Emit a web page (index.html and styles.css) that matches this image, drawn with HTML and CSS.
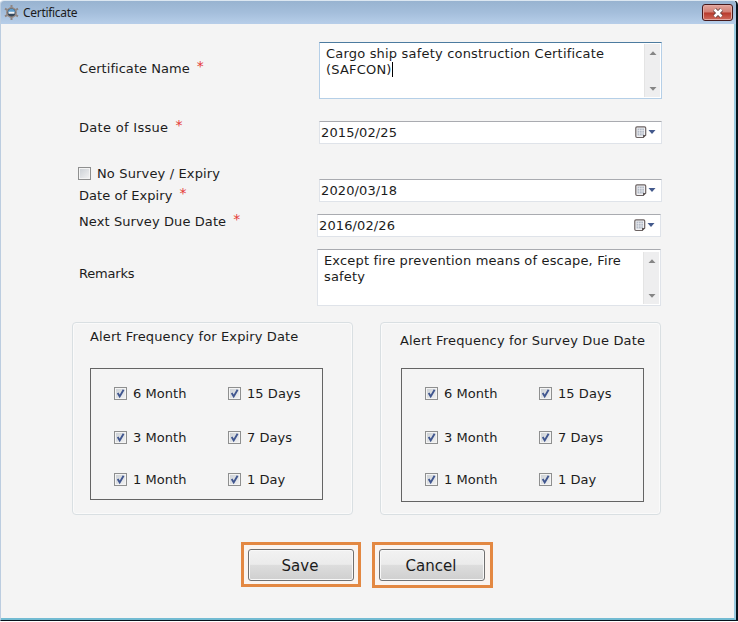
FILE: index.html
```html
<!DOCTYPE html>
<html lang="en">
<head>
<meta charset="utf-8">
<title>Certificate</title>
<link rel="stylesheet" href="styles.css">
</head>
<body>
<svg width="0" height="0" class="defs">
  <symbol id="cal" viewBox="0 0 21 13">
    <path d="M.8 2Q.8.8 2 .8H9.5Q10.700 .8 10.700 2V9L8.200 11.500H2Q.8 11.500 .8 10.300Z" fill="#f2f2f4" stroke="#6b6262" stroke-width="1.200"/>
    <path d="M2.500 2.500h6.500v7h-6.500z" fill="#b4bbc7"/>
    <path d="M2.500 4.500h6.500M2.500 7h6.500M4.500 2.500v7M7 2.500v7" stroke="#eef0f4" stroke-width=".6"/>
    <path d="M8 12V9h3.200z" fill="#5d5656"/>
    <path d="M13.500 4h7L17 8z" fill="#43598c"/>
  </symbol>
  <symbol id="up" viewBox="0 0 8 4"><path d="M.5 4h7L4 .3z" fill="#858585"/></symbol>
  <symbol id="down" viewBox="0 0 8 4"><path d="M.5 0h7L4 3.700z" fill="#858585"/></symbol>
  <symbol id="tick" viewBox="0 0 13 13"><path d="M3.700 6 5.700 9.400 9.600 2.800" fill="none" stroke="#40568f" stroke-width="1.900"/></symbol>
</svg>
<div class="window">
  <header class="titlebar">
    <svg class="logo" width="15" height="15" viewBox="0 0 15 15">
      <path d="M7.500 0v15M1 3.700l13 7.600M14 3.700 1 11.300" stroke="#8d8582" stroke-width="2"/>
      <circle cx="7.500" cy="7.500" r="4.700" fill="#34485c" stroke="#9a8c86" stroke-width="1.500"/>
      <path d="M4 7.300a3.500 3.500 0 0 1 7 0z" fill="#5c9ccc"/>
      <path d="M4.500 6.800h6v2h-6z" fill="#f1f5f8"/>
    </svg>
    <span class="title">Certificate</span>
    <button class="close" aria-label="Close"><svg width="12" height="10" viewBox="0 0 12 10"><path d="M2.500 1.500l7 7M9.500 1.500l-7 7" stroke="#60413f" stroke-width="4.200"/><path d="M2.500 1.500l7 7M9.500 1.500l-7 7" stroke="#fff" stroke-width="2.600"/></svg></button>
  </header>
  <main>
    <div class="row">
      <div class="label name">Certificate Name<i>*</i></div>
      <div class="area focus"><p>Cargo ship safety construction Certificate<br>(SAFCON)<b class="caret"></b></p><div class="scroll"><svg><use href="#up"/></svg><svg><use href="#down"/></svg></div></div>
    </div>
    <div class="row issue">
      <div class="label">Date of Issue<i>*</i></div>
      <div class="date"><span>2015/02/25</span><svg><use href="#cal"/></svg></div>
    </div>
    <div class="row expiry">
      <div class="label">
        <div class="check"><span class="box"></span>No Survey / Expiry</div>
        <div class="sub">Date of Expiry<i>*</i></div>
      </div>
      <div class="date"><span>2020/03/18</span><svg><use href="#cal"/></svg></div>
    </div>
    <div class="row survey">
      <div class="label">Next Survey Due Date<i>*</i></div>
      <div class="date"><span>2016/02/26</span><svg><use href="#cal"/></svg></div>
    </div>
    <div class="row remarks">
      <div class="label">Remarks</div>
      <div class="area"><p>Except fire prevention means of escape, Fire<br>safety</p><div class="scroll"><svg><use href="#up"/></svg><svg><use href="#down"/></svg></div></div>
    </div>
    <div class="panels">
      <section class="panel">
        <h2>Alert Frequency for Expiry Date</h2>
        <div class="options">
          <div class="check"><span class="box"><svg><use href="#tick"/></svg></span>6 Month</div><div class="check"><span class="box"><svg><use href="#tick"/></svg></span>15 Days</div>
          <div class="check"><span class="box"><svg><use href="#tick"/></svg></span>3 Month</div><div class="check"><span class="box"><svg><use href="#tick"/></svg></span>7 Days</div>
          <div class="check"><span class="box"><svg><use href="#tick"/></svg></span>1 Month</div><div class="check"><span class="box"><svg><use href="#tick"/></svg></span>1 Day</div>
        </div>
      </section>
      <section class="panel due">
        <h2>Alert Frequency for Survey Due Date</h2>
        <div class="options">
          <div class="check"><span class="box"><svg><use href="#tick"/></svg></span>6 Month</div><div class="check"><span class="box"><svg><use href="#tick"/></svg></span>15 Days</div>
          <div class="check"><span class="box"><svg><use href="#tick"/></svg></span>3 Month</div><div class="check"><span class="box"><svg><use href="#tick"/></svg></span>7 Days</div>
          <div class="check"><span class="box"><svg><use href="#tick"/></svg></span>1 Month</div><div class="check"><span class="box"><svg><use href="#tick"/></svg></span>1 Day</div>
        </div>
      </section>
    </div>
    <div class="actions">
      <div class="ring"><button class="btn">Save</button></div>
      <div class="ring cancel"><button class="btn">Cancel</button></div>
    </div>
  </main>
</div>
</body>
</html>
```
FILE: styles.css
```css
* { box-sizing: border-box; }
body { margin: 0; background: #fff; font: 13px/16px "DejaVu Sans", sans-serif; letter-spacing: 0.05px; color: #1c1c1c; overflow: hidden; }
.defs { display: block; }
.window { width: 738px; height: 621px; background: #f4f4f4; border-left: 1px solid #bccde0; border-right: 2px solid #07131c; border-bottom: 1px solid #07131c; border-top: 1px solid #dce7f1; border-radius: 4px 5px 0 0; display: flex; flex-direction: column; overflow: hidden; }
.titlebar { height: 23px; flex: none; display: flex; background: linear-gradient(#98b3d0, #a4bedb 50%, #b7cee9); }
.logo { margin: 4px 4px 0 3px; }
.title { font: 12px/24px "Noto Sans", sans-serif; letter-spacing: -0.3px; flex: 1; }
.close { width: 31px; height: 17px; margin: 3px 3px 0 0; padding: 0; border: 1px solid #46191b; border-radius: 3px; background: linear-gradient(#e3a59c, #d27f74 48%, #b8392b 52%, #cf6b5d); box-shadow: inset 0 0 0 1px #e4aaa3; display: flex; align-items: center; justify-content: center; }
main { flex: 1; padding: 18px 0 0 71px; border-right: 2px solid #9acbe0; border-bottom: 2px solid #72bbd2; }
.row { display: flex; }
.label { width: 247px; flex: none; padding-left: 7px; white-space: nowrap; }
.label i { font-style: normal; color: #e53935; font-size: 14px; line-height: 1; margin-left: 7px; position: relative; top: -2px; }
.name { padding-top: 19px; }
.area { width: 343px; height: 57px; display: flex; background: #fff; border: 1px solid #dfe3e9; border-top-color: #a9abb0; padding: 1px; }
.area.focus { border-color: #b5cfe7; border-top-color: #4c7b9f; }
.area p { margin: 0; flex: 1; padding: 2px 0 0 5px; white-space: nowrap; letter-spacing: 0.19px; }
.caret { display: inline-block; width: 1px; height: 15px; background: #000; vertical-align: -3px; }
.scroll { width: 16px; background: #eeeeef; border-left: 1px solid #e4e4e4; display: flex; flex-direction: column; justify-content: space-between; align-items: center; padding: 7px 0 6px; }
.scroll svg { width: 8px; height: 4px; }
.issue { margin-top: 22px; }
.issue .label { letter-spacing: 0.3px; line-height: 12px; margin-top: -1px; }
.date { width: 343px; height: 23px; display: flex; justify-content: space-between; background: #fff; border: 1px solid #dfe3e9; border-top-color: #a9abb0; padding: 3px 5px 0 1px; letter-spacing: 0.12px; }
.date svg { width: 21px; height: 13px; margin-top: 1px; }
.expiry { margin-top: 22px; height: 36px; align-items: flex-end; }
.expiry .label { align-self: stretch; padding-left: 6px; }
.check { display: flex; align-items: center; height: 16px; white-space: nowrap; }
.box { width: 13px; height: 13px; border: 1px solid #8e8f8f; background: linear-gradient(135deg, #c9ced3, #f4f4f4); box-shadow: inset 0 0 0 1px #f4f4f4; margin: 0 6px 2px 0; flex: none; }
.box svg { display: block; width: 13px; height: 13px; margin: -1px; }
.expiry .check { letter-spacing: 0.15px; }
.sub { padding: 6px 0 0 1px; }
.survey { margin-top: 12px; }
.survey .label { letter-spacing: 0.1px; }
.survey .label, .remarks .label { width: 245px; }
.survey .date, .remarks .area { width: 344px; }
.remarks { margin-top: 12px; }
.remarks .label { padding-top: 17px; letter-spacing: -0.2px; }
.remarks .area { padding-top: 2px; }
.remarks .area p { padding-top: 1px; letter-spacing: 0.16px; }
.panels { display: flex; gap: 27px; margin-top: 16px; }
.panel { width: 281px; height: 193px; border: 1px solid #d9dfe2; border-radius: 4px; padding: 6px 0 0 17px; box-shadow: inset 0 0 0 1px #fafafa; }
h2 { margin: 0; font: inherit; letter-spacing: 0.13px; height: 39px; white-space: nowrap; }
.options { width: 233px; height: 132px; border: 1px solid #646464; display: grid; grid-template-columns: 114px 100px; grid-template-rows: 44px 42px 16px; padding: 17px 0 0 23px; }
.due { padding: 10px 0 0 19px; }
.due h2 { height: 35px; letter-spacing: 0.17px; }
.due .options { width: 243px; height: 134px; margin-left: 1px; }
.actions { display: flex; align-items: flex-start; gap: 11px; margin: 27px 0 0 169px; }
.ring { width: 120px; height: 45px; border: 3px solid #e38842; padding: 4px; background: #faf4f0; }
.cancel { width: 121px; height: 46px; }
.btn { display: block; width: 106px; height: 32px; padding: 1px 2px 0 0; border: 1px solid #707070; border-radius: 3px; background: linear-gradient(#f2f2f2, #ebebeb 48%, #dddddd 50%, #cfcfcf); box-shadow: inset 0 0 0 1px #f8f8f8; font: 15px "DejaVu Sans", sans-serif; color: #1c1c1c; }
```
